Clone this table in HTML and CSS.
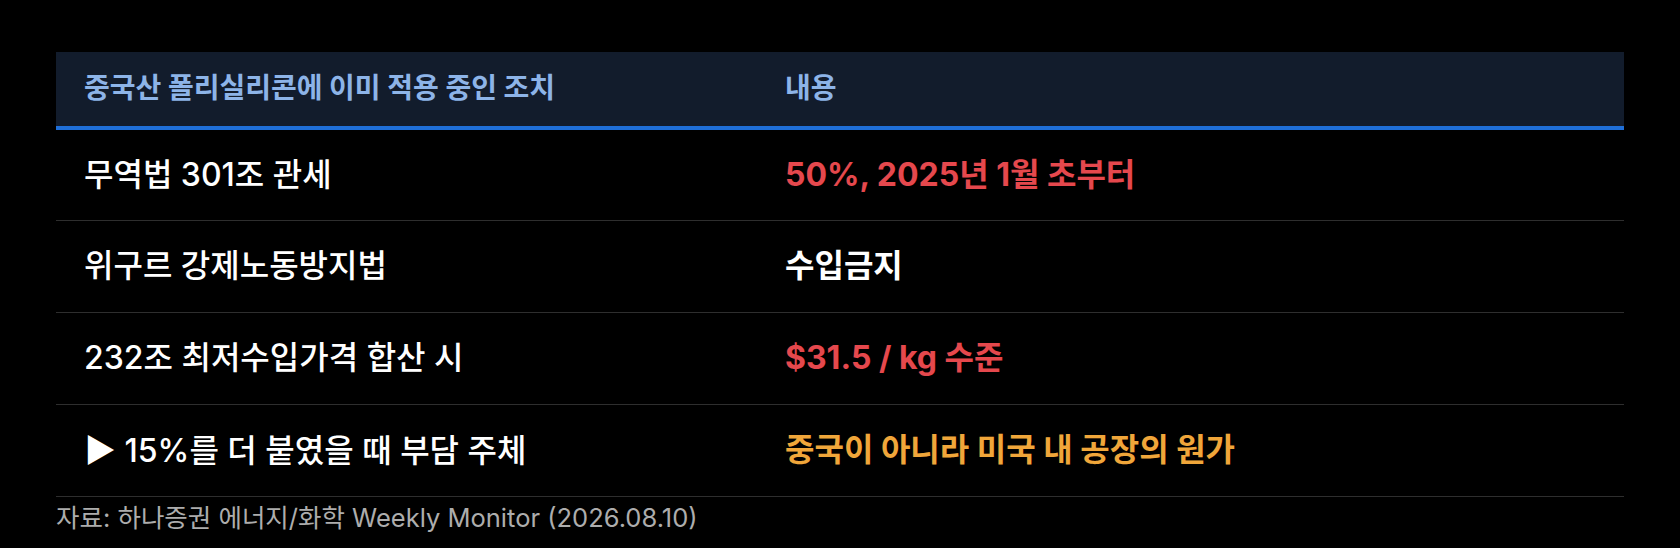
FILE: index.html
```html
<!DOCTYPE html>
<html lang="ko">
<head>
<meta charset="utf-8">
<link rel="stylesheet" href="styles.css">
</head>
<body>
<div class="wrap">
  <table class="tbl">
    <colgroup><col class="c1"><col class="c2"></colgroup>
    <thead>
      <tr><th>중국산 폴리실리콘에 이미 적용 중인 조치</th><th>내용</th></tr>
    </thead>
    <tbody>
      <tr><td>무역법 301조 관세</td><td class="red">50%, 2025년 1월 초부터</td></tr>
      <tr><td>위구르 강제노동방지법</td><td class="plain">수입금지</td></tr>
      <tr><td>232조 최저수입가격 합산 시</td><td class="red">$31.5 / kg 수준</td></tr>
      <tr><td><span class="tri">▶</span> 15%를 더 붙였을 때 부담 주체</td><td class="orange">중국이 아니라 미국 내 공장의 원가</td></tr>
    </tbody>
  </table>
  <p class="source">자료: 하나증권 에너지/화학 Weekly Monitor (2026.08.10)</p>
</div>
</body>
</html>
```
FILE: styles.css
```css
html, body {
  margin: 0;
  padding: 0;
  background: #000;
}
body {
  font-family: Inter, "Noto Sans CJK KR", sans-serif;
  color: #fff;
}
.wrap {
  padding: 52px 56px 0;
}
.tbl {
  width: 100%;
  border-collapse: collapse;
  table-layout: fixed;
}
.c1 { width: 701px; }
.tbl th {
  background: #121c2c;
  color: #8db4e8;
  font-size: 28px;
  font-weight: 700;
  text-align: left;
  height: 74px;
  padding: 0 28px;
  border-bottom: 4px solid #1f6fd8;
  vertical-align: middle;
  line-height: 1.2;
}
.tbl td {
  height: 92px;
  padding: 0 28px;
  font-size: 32px;
  font-weight: 500;
  line-height: 1.2;
  border-bottom: 1px solid #2e2e2e;
  vertical-align: middle;
  box-sizing: border-box;
}
.tbl td.red { color: #e5484d; font-weight: 700; }
.tbl td.orange { color: #f0a63a; font-weight: 700; }
.tbl td.plain { font-weight: 600; }
.tri {
  font-family: "Noto Sans CJK KR", sans-serif;
}
.source {
  margin: 6px 0 0;
  font-size: 25.5px;
  line-height: 30px;
  color: #adadad;
}
```
